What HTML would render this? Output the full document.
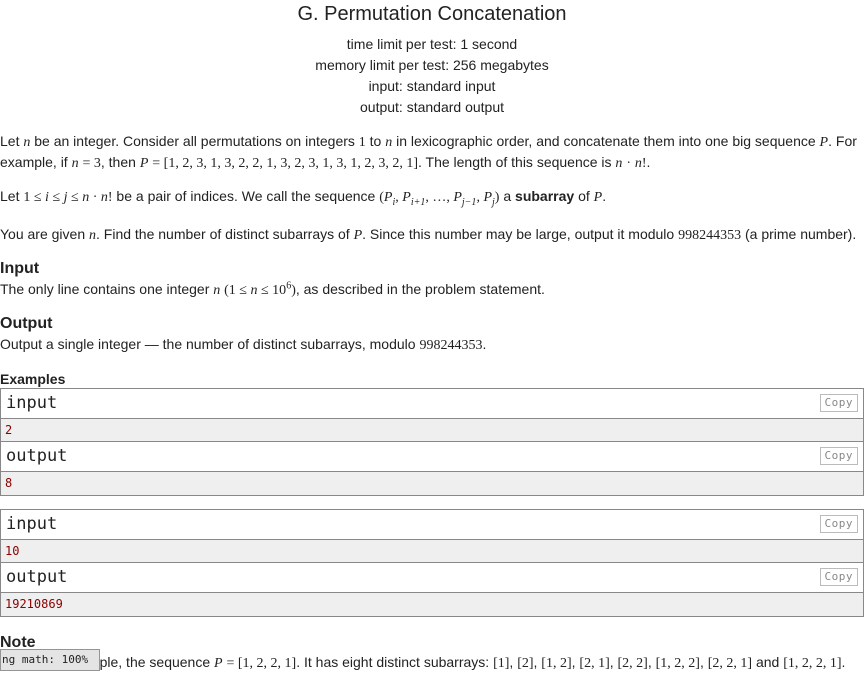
<!DOCTYPE html>
<html><head><meta charset="utf-8"><style>
body{margin:0;width:864px;height:670px;overflow:hidden;background:#fff;font-family:"Liberation Sans",sans-serif;font-size:14px;color:#222;position:relative}
.a{position:absolute;white-space:nowrap;line-height:21px}
.c{left:0;width:864px;text-align:center}
.m{font-family:"Liberation Serif",serif;font-size:14px}
i.m{font-style:italic}
sub,sup{line-height:0;font-size:10px}
h{font-weight:bold;font-size:16px}
.box{position:absolute;left:0;width:862px;border:1px solid #888}
.hd{height:29px;border-bottom:1px solid #888;font-family:"DejaVu Sans Mono",monospace;font-size:17px;line-height:29px;padding-left:5px;position:relative;background:#fff}
.dt{height:22px;background:#efefef;font-family:"DejaVu Sans Mono",monospace;font-size:12px;color:#8b0000;line-height:22px;padding-left:4px;border-bottom:1px solid #888}
.last{border-bottom:none;height:23px}
.cp{position:absolute;right:5px;top:5px;border:1px solid #bbb;font-size:11px;color:#888;line-height:16px;padding:0 4px;font-family:"DejaVu Sans Mono",monospace;letter-spacing:.5px}
</style></head><body>
<div class="a c" style="top:2px;font-size:20px;line-height:24px">G. Permutation Concatenation</div>
<div class="a c" style="top:34px">time limit per test: 1 second</div>
<div class="a c" style="top:55px">memory limit per test: 256 megabytes</div>
<div class="a c" style="top:76px">input: standard input</div>
<div class="a c" style="top:97px">output: standard output</div>
<div class="a" style="left:0;top:131px">Let <i class="m">n</i> be an integer. Consider all permutations on integers <span class="m">1</span> to <i class="m">n</i> in lexicographic order, and concatenate them into one big sequence <i class="m">P</i>. For</div>
<div class="a" style="left:0;top:152px">example, if <i class="m">n</i> <span class="m">= 3</span>, then <i class="m">P</i> <span class="m">= [1, 2, 3, 1, 3, 2, 2, 1, 3, 2, 3, 1, 3, 1, 2, 3, 2, 1]</span>. The length of this sequence is <i class="m">n</i> <span class="m">·</span> <i class="m">n</i><span class="m">!</span>.</div>
<div class="a" style="left:0;top:186px">Let <span class="m">1 ≤ <i>i</i> ≤ <i>j</i> ≤ <i>n</i> · <i>n</i>!</span> be a pair of indices. We call the sequence <span class="m">(<i>P<sub>i</sub></i>, <i>P<sub>i+1</sub></i>, …, <i>P<sub>j−1</sub></i>, <i>P<sub>j</sub></i>)</span> a <b>subarray</b> of <i class="m">P</i>.</div>
<div class="a" style="left:0;top:224px">You are given <i class="m">n</i>. Find the number of distinct subarrays of <i class="m">P</i>. Since this number may be large, output it modulo <span class="m">998244353</span> (a prime number).</div>
<div class="a" style="left:0;top:258px"><h>Input</h></div>
<div class="a" style="left:0;top:279px">The only line contains one integer <i class="m">n</i> <span class="m">(1 ≤ <i>n</i> ≤ 10<sup>6</sup>)</span>, as described in the problem statement.</div>
<div class="a" style="left:0;top:313px"><h>Output</h></div>
<div class="a" style="left:0;top:334px">Output a single integer — the number of distinct subarrays, modulo <span class="m">998244353</span>.</div>
<div class="a" style="left:0;top:369px;font-weight:bold">Examples</div>
<div class="box" style="top:388px">
<div class="hd">input<span class="cp">Copy</span></div><div class="dt">2</div>
<div class="hd">output<span class="cp">Copy</span></div><div class="dt last">8</div></div>
<div class="box" style="top:509px">
<div class="hd">input<span class="cp">Copy</span></div><div class="dt">10</div>
<div class="hd">output<span class="cp">Copy</span></div><div class="dt last">19210869</div></div>
<div class="a" style="left:0;top:632px"><h>Note</h></div>
<div class="a" style="left:0;top:652px">In the first example, the sequence <i class="m">P</i> <span class="m">= [1, 2, 2, 1]</span>. It has eight distinct subarrays: <span class="m">[1]</span>, <span class="m">[2]</span>, <span class="m">[1, 2]</span>, <span class="m">[2, 1]</span>, <span class="m">[2, 2]</span>, <span class="m">[1, 2, 2]</span>, <span class="m">[2, 2, 1]</span> and <span class="m">[1, 2, 2, 1]</span>.</div>
<div style="position:absolute;left:0;top:649px;width:97px;height:20px;background:#e4e4e4;border:1px solid #959595;font-family:'DejaVu Sans Mono',monospace;font-size:11px;line-height:20px;padding-left:1px;overflow:hidden;white-space:nowrap">ng math: 100%</div>
</body></html>
